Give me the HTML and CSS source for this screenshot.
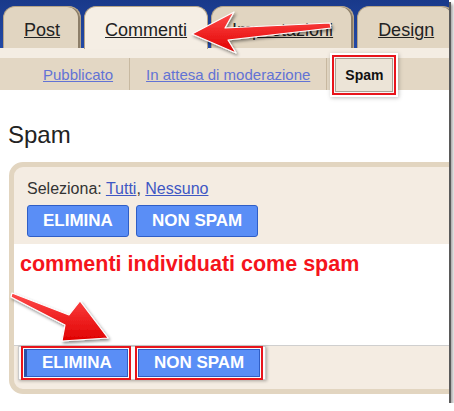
FILE: index.html
```html
<!DOCTYPE html>
<html lang="it">
<head>
  <meta charset="UTF-8" />
  <title>Commenti - Spam</title>
  <link rel="stylesheet" href="styles.css">
</head>
<body>
  <div class="schermata">
    <nav class="schede">
      <a class="scheda" href="#">Post</a>
      <a class="scheda attiva" href="#">Commenti</a>
      <a class="scheda" href="#">Impostazioni</a>
      <a class="scheda" href="#">Design</a>
    </nav>
    <div class="striscia"></div>
    <div class="sottomenu">
      <a class="voce" href="#">Pubblicato</a>
      <a class="voce" href="#">In attesa di moderazione</a>
      <span class="corrente">Spam</span>
    </div>

    <h2 class="titolo">Spam</h2>

    <div class="riquadro">
      <div class="riquadro-alto">
        <div class="seleziona">Seleziona: <a href="#">Tutti</a>, <a href="#">Nessuno</a></div>
        <div class="pulsanti">
          <button class="btn">ELIMINA</button>
          <button class="btn">NON SPAM</button>
        </div>
      </div>
      <div class="riquadro-corpo">
        <p class="nota">commenti individuati come spam</p>
      </div>
      <div class="riquadro-basso">
        <div class="evidenzia">
          <button class="btn basso premuto">ELIMINA</button>
          <button class="btn basso">NON SPAM</button>
        </div>
      </div>
    </div>

    <!-- frecce disegnate sopra lo screenshot -->
    <svg class="frecce" width="449" height="403" viewBox="0 0 449 403">
      <defs>
        <linearGradient id="rosso" x1="0" y1="0" x2="0" y2="1">
          <stop offset="0" stop-color="#ff4a4a"/>
          <stop offset="1" stop-color="#e00000"/>
        </linearGradient>
        <filter id="ombra" x="-20%" y="-40%" width="140%" height="180%">
          <feDropShadow dx="1.5" dy="2" stdDeviation="1.5" flood-color="#000" flood-opacity="0.45"/>
        </filter>
      </defs>
      <polygon points="192,34 234,12 225,28 330,23 331,28 228,40 236,53"
               fill="url(#rosso)" stroke="#fff" stroke-width="1.2" stroke-linejoin="round" filter="url(#ombra)"/>
      <polygon points="12,293 69,315 80,301 108,338 62,341 65,325 11,297"
               fill="url(#rosso)" stroke="#fff" stroke-width="1.2" stroke-linejoin="round" filter="url(#ombra)"/>
    </svg>
  </div>
</body>
</html>
```

FILE: styles.css
```css
* { box-sizing: border-box; }
body {
  margin: 0; background: #fff;
  font-family: "Liberation Sans", Arial, sans-serif;
}
.schermata {
  position: relative; width: 449px; height: 403px; overflow: hidden;
  background: #fff; box-shadow: 2px 2px 0 #5a5a5a, 4px 4px 3px rgba(0, 0, 0, 0.35);
}

/* schede in alto */
.schede {
  display: flex; gap: 3px; height: 48px; padding: 6px 0 0 3px;
  background: linear-gradient(#19398a, #2249a6);
}
.scheda {
  flex: none; height: 42px; padding: 13px 20px 0;
  border: 1px solid #b6a487; border-bottom: 0; border-radius: 12px 12px 0 0;
  background: #e1d5c1; box-shadow: inset -2px 0 0 #8c7e69;
  color: #222; font-size: 18px; line-height: 20px; text-decoration: underline;
}
.scheda.attiva {
  height: 43px; background: #f5eee4; box-shadow: none; position: relative; z-index: 1;
}
.striscia { height: 10px; background: #f4ede3; }

/* sottomenu */
.sottomenu {
  display: flex; height: 32px; padding-left: 27px; background: #e3d7c4;
  position: relative; z-index: 2;
}
.voce {
  display: flex; align-items: center; padding: 0 16px;
  border-right: 1px solid #c8b9a1;
  color: #6273d5; font-size: 15px; text-decoration: underline;
}
.corrente {
  display: flex; align-items: center; margin: 0 0 -2px 8px; padding: 0 9px;
  border: 1px solid #aaa194; background: #ece4d7;
  color: #111; font-size: 14px; font-weight: bold;
  box-shadow: 0 0 0 1px #f6f6f6, 0 0 0 3px #e8141b, 0 0 0 5px #fff, 1px 1px 4px 5px rgba(0, 0, 0, 0.25);
}

.titolo {
  margin: 31px 0 13px; padding-left: 8px;
  font-size: 24px; line-height: 28px; font-weight: normal; color: #222;
}

/* riquadro spam */
.riquadro {
  margin: 0 -20px 0 9px; border: 5px solid #e2d5c0; border-radius: 14px;
  background: #f4ece2; overflow: hidden;
}
.riquadro-alto { height: 77px; padding: 12px 13px 7px; }
.seleziona { font-size: 16px; line-height: 20px; color: #333; }
.seleziona a { color: #3e57c4; text-decoration: underline; }
.pulsanti { display: flex; gap: 7px; margin-top: 6px; }
.btn {
  height: 32px; padding: 0 15px; border: 1px solid #2f5ec6; border-radius: 3px;
  background: #5a8ef6; color: #fff;
  font-family: "Liberation Sans", Arial, sans-serif; font-size: 17px; font-weight: bold;
  line-height: 30px;
}
.riquadro-corpo {
  height: 102px; padding: 8px 6px 0; background: #fff; border-bottom: 1px solid #cfcfcf;
}
.nota {
  margin: 0; color: #f5141c; font-size: 21.5px; line-height: 24px; font-weight: bold;
}
.riquadro-basso { padding: 0 0 9px 4px; }
.evidenzia {
  display: inline-flex; gap: 10px; padding: 2px 5px;
  background: #fbfbfb; border: 1px solid #c9c9c9;
  box-shadow: 1px 1px 3px rgba(0, 0, 0, 0.3);
}
.btn.basso {
  height: 28px; line-height: 26px; border-radius: 0;
  outline: 2px solid #e8141b; outline-offset: 1px;
}
.btn.premuto { border-left: 3px solid #2a4fa8; }

.frecce { position: absolute; left: 0; top: 0; pointer-events: none; z-index: 5; }
```
